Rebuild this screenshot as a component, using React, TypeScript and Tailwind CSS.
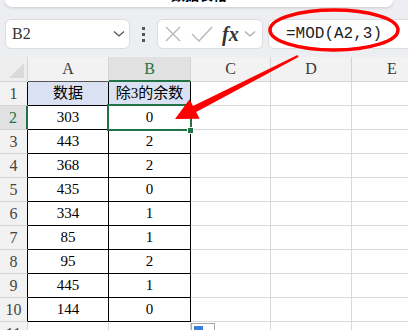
const COLS = [28, 81, 82, 80, 81, 81];
const LETTERS = ["", "A", "B", "C", "D", "E"];

const rows: [string, string][] = [
  ["数据", "除3的余数"],
  ["303", "0"],
  ["443", "2"],
  ["368", "2"],
  ["435", "0"],
  ["334", "1"],
  ["85", "1"],
  ["95", "2"],
  ["445", "1"],
  ["144", "0"],
];

const serif = "font-['Liberation_Serif','Noto_Sans_CJK_SC',serif]";

function Chevron({ className = "" }: { className?: string }) {
  return (
    <svg width="12" height="8" viewBox="0 0 12 8" className={className}>
      <path d="M1 1.5 L6 6 L11 1.5" fill="none" stroke="currentColor" strokeWidth="1.3" />
    </svg>
  );
}

function FormulaBar() {
  return (
    <div className="h-[57px] bg-[#eceef1]">
      <div className="ml-[5px] w-[388px] h-[7px] bg-white rounded-b-lg shadow-[0_1px_3px_rgba(0,0,0,0.15)] overflow-hidden flex justify-center">
        <span className="-mt-[15px] text-[14px] font-bold text-black font-['Noto_Sans_CJK_SC',sans-serif] leading-[18px]">
          数据表格
        </span>
      </div>
      <div className="mt-[12px] flex items-stretch h-[30px]">
        <div className="shrink-0 ml-[5px] w-[125px] bg-white border border-[#dcdcdc] rounded-md flex items-center justify-between pl-[6px] pr-[4px]">
          <span className={`${serif} text-[16px] text-[#333]`}>B2</span>
          <Chevron className="text-[#555]" />
        </div>
        <div className="shrink-0 w-[27px] flex flex-col items-center justify-center gap-[3px]">
          <span className="w-[3px] h-[3px] bg-[#555]" />
          <span className="w-[3px] h-[3px] bg-[#555]" />
          <span className="w-[3px] h-[3px] bg-[#555]" />
        </div>
        <div className="shrink-0 w-[106px] bg-white border border-[#dcdcdc] rounded-md flex items-center pl-[7px]">
          <svg width="16" height="16" viewBox="0 0 16 16">
            <path d="M1 1 L15 15 M15 1 L1 15" stroke="#b5b5b5" strokeWidth="1.3" />
          </svg>
          <svg width="22" height="16" viewBox="0 0 22 16" className="ml-[10px]">
            <path d="M1 8 L8 15 L21 1" fill="none" stroke="#b5b5b5" strokeWidth="1.3" />
          </svg>
          <span className="ml-[9px] font-['Liberation_Serif',serif] italic font-bold text-[20px] text-[#333] leading-none">
            fx
          </span>
          <Chevron className="ml-[5px] text-[#aaa]" />
        </div>
        <div className="shrink-0 ml-[5px] w-[170px] bg-white border border-[#dcdcdc] rounded-md flex items-center pl-[17px]">
          <span className="font-['Liberation_Mono',monospace] text-[16px] text-[#222]">=MOD(A2,3)</span>
        </div>
      </div>
    </div>
  );
}

function HeaderRow() {
  return (
    <div className="flex h-[25px]">
      {COLS.map((w, i) => {
        if (i === 0) {
          return (
            <div
              key={i}
              style={{ width: w }}
              className="shrink-0 bg-[#eeeeee] border-r border-b border-[#d4d4d4] flex items-end justify-end pr-[3px] pb-[3px]"
            >
              <svg width="15" height="15" viewBox="0 0 15 15">
                <path d="M15 0 L15 15 L0 15 Z" fill="#dadada" />
              </svg>
            </div>
          );
        }
        const sel = i === 2;
        return (
          <div
            key={i}
            style={{ width: w }}
            className={`shrink-0 flex items-center justify-center border-r ${serif} text-[16px] ${
              sel
                ? "bg-[#e1e1e1] border-b-2 border-b-[#217346] border-r-[#d4d4d4] text-[#217346]"
                : i === 1
                ? "bg-[#f2f2f2] border-b border-b-[#555] border-r-[#d4d4d4] text-[#3a3a3a]"
                : "bg-[#f2f2f2] border-b border-[#d4d4d4] text-[#3a3a3a]"
            }`}
          >
            {LETTERS[i]}
          </div>
        );
      })}
    </div>
  );
}

function DataRow({ n }: { n: number }) {
  const data = rows[n - 1];
  const inTable = n <= 10;
  return (
    <div className="flex h-[24px]">
      <div
        style={{ width: COLS[0] }}
        className={`shrink-0 flex items-center justify-center border-b border-b-[#d4d4d4] ${serif} text-[16px] ${
          n === 2
            ? "bg-[#e1e1e1] border-r-2 border-r-[#217346] text-[#217346]"
            : inTable
            ? "bg-[#f2f2f2] border-r border-r-black text-[#444]"
            : "bg-[#f2f2f2] border-r border-r-[#d4d4d4] text-[#444]"
        }`}
      >
        {n}
      </div>
      {COLS.slice(1).map((w, j) => {
        const table = inTable && j < 2;
        const text = table ? data[j] : "";
        return (
          <div
            key={j}
            style={{ width: w }}
            className={`shrink-0 flex items-center justify-center border-r border-b text-[15px] text-black font-['Liberation_Serif','Noto_Sans_CJK_SC',serif] ${
              table ? "border-black" : "border-[#d9d9d9]"
            } ${table && n === 1 ? "bg-[#d9e1f2]" : "bg-white"}`}
          >
            {text}
          </div>
        );
      })}
    </div>
  );
}

export default function App() {
  return (
    <div className="relative w-[408px] h-[330px] overflow-hidden bg-white">
      <FormulaBar />
      <HeaderRow />
      {Array.from({ length: 11 }, (_, i) => (
        <DataRow key={i} n={i + 1} />
      ))}

      {/* selected cell B2 */}
      <div className="absolute left-[107px] top-[104px] w-[85px] h-[27px] border-2 border-[#217346]" />
      <div className="absolute left-[187px] top-[127px] w-[7px] h-[7px] bg-[#217346] border border-white" />

      {/* quick analysis icon */}
      <div className="absolute left-[191px] top-[323px] w-[24px] h-[14px] border border-[#a8a8a8] bg-white p-[2px]">
        <div className="w-[9px] h-[9px] bg-[#3b7ddd]" />
      </div>

      {/* annotation */}
      <svg className="absolute inset-0 pointer-events-none" width="408" height="330">
        <ellipse cx="334" cy="30" rx="64" ry="20" fill="none" stroke="#ff0000" strokeWidth="3.5" />
        <polygon
          points="175,119 199.6,118.8 196.2,112.1 298.5,56.9 297.5,55.1 193,105.9 189.6,99.2"
          fill="#ff0000"
        />
      </svg>
    </div>
  );
}
